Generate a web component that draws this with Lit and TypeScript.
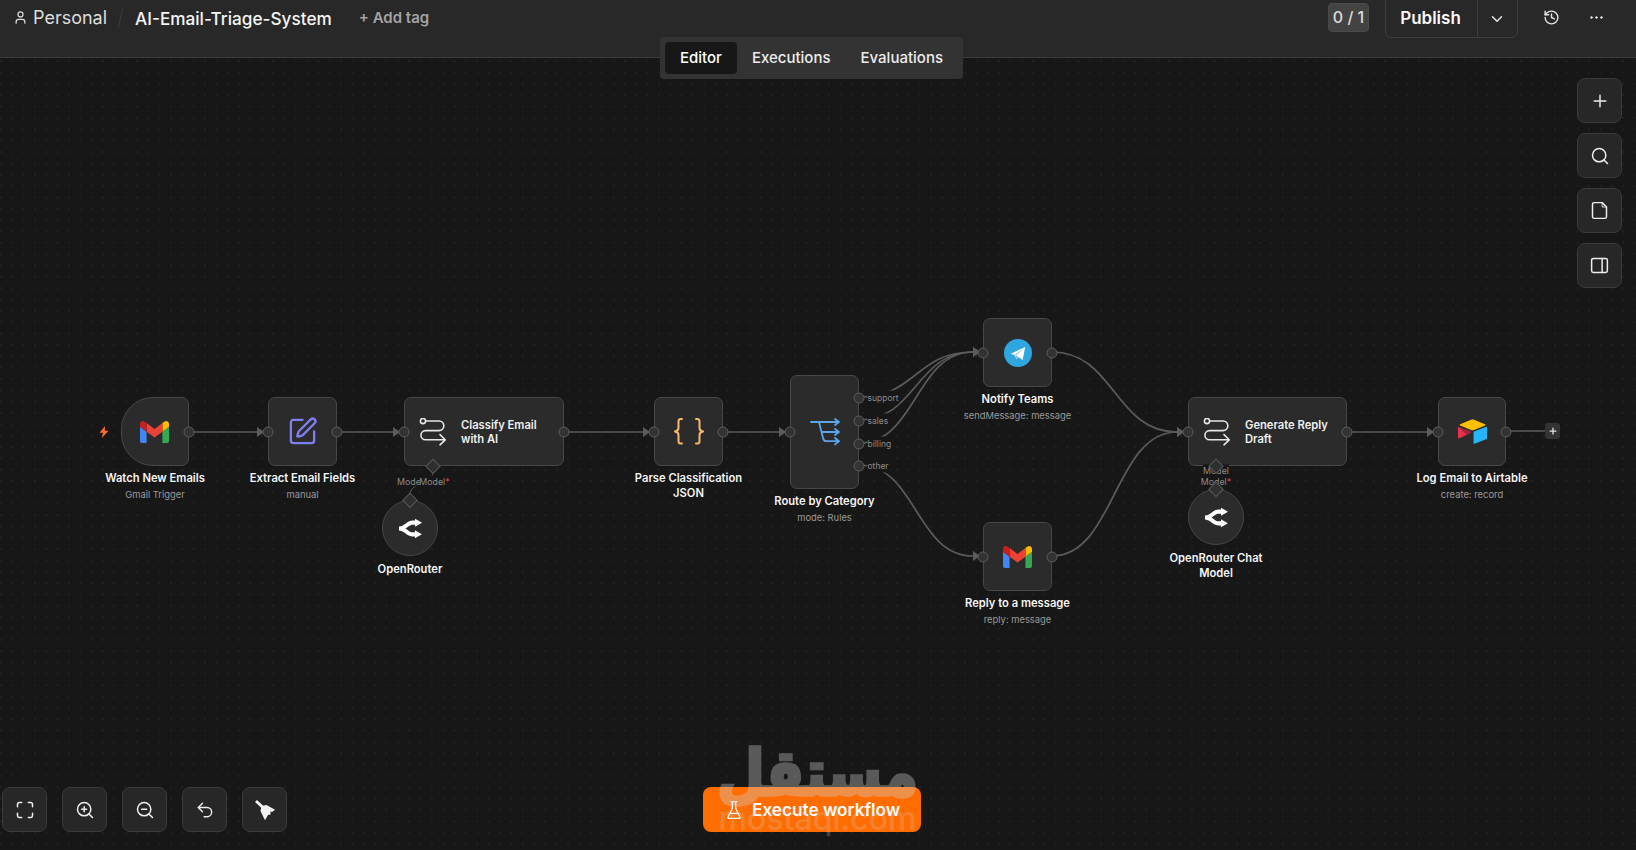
import { LitElement, html, svg, css, nothing } from 'lit';
import { customElement } from 'lit/decorators.js';

const HEAD = 58; // canvas starts below the header, node data is in page coordinates

const icon = (body: unknown, size = 20, sw = 2) => html`<svg
  width=${size} height=${size} viewBox="0 0 24 24" fill="none" stroke="currentColor"
  stroke-width=${sw} stroke-linecap="round" stroke-linejoin="round">${body}</svg>`;

const gmail = html`<svg width="29" height="22" viewBox="52 42 88 66">
  <path fill="#4285f4" d="M58 108h14V74L52 59v43c0 3.32 2.69 6 6 6"/>
  <path fill="#34a853" d="M120 108h14c3.32 0 6-2.69 6-6V59l-20 15"/>
  <path fill="#fbbc04" d="M120 48v26l20-15v-8c0-7.42-8.47-11.65-14.4-7.2"/>
  <path fill="#ea4335" d="M72 74V48l24 18 24-18v26L96 92"/>
  <path fill="#c5221f" d="M52 51v8l20 15V48l-5.6-4.2c-5.94-4.45-14.4-.22-14.4 7.2"/>
</svg>`;

const pen = html`<svg width="31" height="31" viewBox="0 0 24 24" fill="none" stroke="#7f7ff2" stroke-width="1.8"
  stroke-linecap="round" stroke-linejoin="round">
  <path d="M12 3H5a2 2 0 0 0-2 2v14a2 2 0 0 0 2 2h14a2 2 0 0 0 2-2v-7"/>
  <path d="M18.375 2.625a1 1 0 0 1 3 3l-9.013 9.014a2 2 0 0 1-.853.505l-2.873.84a.5.5 0 0 1-.62-.62l.84-2.873a2 2 0 0 1 .506-.852z"/>
</svg>`;

const agent = html`<svg width="27" height="28" viewBox="0 0 27 28" fill="none" stroke="#e6e6e6" stroke-width="1.6"
  stroke-linecap="round" stroke-linejoin="round">
  <circle cx="4" cy="3" r="2.6"/>
  <path d="M7 3H20a4.8 4.8 0 0 1 0 9.6H6.5a4.6 4.6 0 0 0 0 9.2H26M21 16.6l5.2 5.2-5.2 5"/>
</svg>`;

const braces = html`<svg width="30" height="27" viewBox="0 0 30 27" fill="none" stroke="#f6b76c" stroke-width="2"
  stroke-linecap="round" stroke-linejoin="round">
  <path d="M8 1H6.5C5 1 4.5 2 4.5 3.5V10C4.5 11.5 3.5 13 1 13.5C3.5 14 4.5 15.5 4.5 17V23C4.5 24.5 5 25.5 6.5 25.5H8"/>
  <path d="M22 1H23.500C25 1 25.500 2 25.500 3.500V10C25.500 11.500 26.500 13 29 13.500C26.500 14 25.500 15.500 25.500 17V23C25.500 24.500 25 25.500 23.500 25.500H22"/>
</svg>`;

const route = html`<svg width="30" height="28" viewBox="0 0 30 28" fill="none" stroke="#5aa5ee" stroke-width="1.8"
  stroke-linecap="round" stroke-linejoin="round">
  <path d="M1 4H29M25 1l4 3-4 3M9 4l4 16c.5 2 1.500 3.200 3.500 3.200H29M25 20l4 3.200-4 3.200M11.500 14H29M25 11l4 3-4 3"/>
</svg>`;

const telegram = html`<svg width="28" height="28" viewBox="0 0 28 28">
  <circle cx="14" cy="14" r="14" fill="#2ea6e0"/>
  <path fill="#c8daea" d="M10.200 15.900 12.600 20.500 12.400 16.600 19 10.500z"/>
  <path fill="#a9c9dd" d="M12.400 16.600 12.600 20.500 14.800 18.200z"/>
  <path fill="#fff" d="M6.800 14.700 21.200 7.900 18.600 21 12.400 16.600 19 10.500 10.200 15.900z"/>
</svg>`;

const airtable = html`<svg width="29" height="25" viewBox="0 0 200 170">
  <path fill="#ffbf00" d="M90 3.600L14.800 34.700c-4.200 1.700-4.100 7.700.1 9.400l75.500 30c6.600 2.600 14 2.600 20.600 0l75.500-30c4.200-1.700 4.200-7.600.1-9.400L111.300 3.600c-6.800-2.800-14.500-2.800-21.300 0"/>
  <path fill="#26b5f8" d="M107.400 90.400v74.800c0 3.600 3.600 6 6.900 4.700l84.100-32.600c1.900-.8 3.200-2.600 3.200-4.700V57.800c0-3.600-3.600-6-6.900-4.700L110.600 85.700c-1.900.8-3.200 2.600-3.200 4.700"/>
  <path fill="#ed3049" d="M87.800 94.300L62.800 106.400l-2.500 1.200-52.800 25.300C4.100 134.500 0 132 0 128.300V58.100c0-1.300.7-2.500 1.600-3.400.4-.4.8-.7 1.200-.9 1.200-.7 2.900-.9 4.300-.3l80.100 31.700c4 1.600 4.300 7.300.6 9.100"/>
  <path fill="#7a1f3d" d="M62.800 106.400l-2.500 1.200L1.600 54.700c.4-.4.8-.7 1.200-.9 1.200-.7 2.900-.9 4.300-.3l80.100 31.700c4 1.600 4.300 7.300.6 9.100z" opacity=".7"/>
</svg>`;

const openrouter = html`<svg width="23" height="23" viewBox="0 0 24 24" fill="#fff">
  <path d="M16.778 1.844v1.919q-.569-.026-1.138-.032-.708-.008-1.415.037c-1.930.126-4.023.728-6.149 2.237-2.911 2.066-2.731 1.950-4.140 2.750-.396.223-1.342.574-2.185.798-.841.225-1.753.333-1.751.333v4.229s.768.108 1.610.333c.842.224 1.789.575 2.185.799 1.410.798 1.228.683 4.140 2.750 2.126 1.509 4.220 2.110 6.148 2.236.880.058 1.716.041 2.555.005v1.918l7.222-4.168-7.222-4.170v2.176c-.860.038-1.611.065-2.278.021-1.364-.090-2.417-.357-3.979-1.465-2.244-1.593-2.866-2.027-3.680-2.508.889-.518 1.449-.906 3.822-2.590 1.560-1.109 2.614-1.377 3.978-1.466.667-.044 1.418-.017 2.278.020v2.176L24 6.014Z"/>
</svg>`;

type Flow = {
  x: number; y: number; w: number; h: number; kind?: string; icon: unknown;
  title: string; sub?: string; inner?: string[]; outs?: [number, string?][]; noIn?: boolean; noOut?: boolean;
};

const nodes: Flow[] = [
  { x: 121, y: 397, w: 68, h: 69, kind: 'trigger', icon: gmail, title: 'Watch New Emails', sub: 'Gmail Trigger', noIn: true },
  { x: 268, y: 397, w: 69, h: 69, icon: pen, title: 'Extract Email Fields', sub: 'manual' },
  { x: 404, y: 397, w: 160, h: 69, kind: 'wide', icon: agent, title: '', inner: ['Classify Email', 'with AI'] },
  { x: 654, y: 397, w: 69, h: 69, icon: braces, title: 'Parse Classification JSON' },
  {
    x: 790, y: 375, w: 69, h: 114, icon: route, title: 'Route by Category', sub: 'mode: Rules',
    outs: [[22, 'support'], [45, 'sales'], [68, 'billing'], [90, 'other']],
  },
  { x: 983, y: 318, w: 69, h: 69, icon: telegram, title: 'Notify Teams', sub: 'sendMessage: message' },
  { x: 983, y: 522, w: 69, h: 69, icon: gmail, title: 'Reply to a message', sub: 'reply: message' },
  { x: 1188, y: 397, w: 159, h: 69, kind: 'wide', icon: agent, title: '', inner: ['Generate Reply', 'Draft'] },
  { x: 1438, y: 397, w: 68, h: 69, icon: airtable, title: 'Log Email to Airtable', sub: 'create: record' },
  { x: 382, y: 500, w: 56, h: 56, kind: 'circle', icon: openrouter, title: 'OpenRouter', noIn: true, noOut: true },
  { x: 1188, y: 489, w: 56, h: 56, kind: 'circle', icon: openrouter, title: 'OpenRouter Chat Model', noIn: true, noOut: true },
];

// [from x, from y, arrow tip x, arrow tip y] in page coordinates
const edges = [
  [189, 432, 264, 432], [337, 432, 400, 432], [564, 432, 650, 432], [723, 432, 786, 432],
  [859, 397, 980, 352], [859, 420, 980, 352], [859, 443, 980, 352], [859, 465, 980, 556],
  [1052, 352, 1184, 432], [1052, 556, 1184, 432], [1347, 432, 1434, 432],
];

const diamonds = [[433, 466], [410, 500], [1216, 466], [1216, 489]];

const portLabels = [
  { x: 410, y: 481, text: 'Model' },
  { x: 434.500, y: 481, text: 'Model', req: true },
  { x: 1216, y: 470, text: 'Model' },
  { x: 1216, y: 481, text: 'Model', req: true },
];

const edgePath = ([x1, y1, x2, y2]: number[]) => {
  const end = x2 - 7;
  const a = y1 - HEAD;
  const b = y2 - HEAD;
  if (a === b) return `M${x1} ${a}H${end}`;
  const mx = (x1 + end) / 2;
  return `M${x1} ${a}C${mx} ${a} ${mx} ${b} ${end} ${b}`;
};

@customElement('app-root')
export class AppRoot extends LitElement {
  static styles = css`
    :host {
      display: flex;
      flex-direction: column;
      position: relative;
      height: 100vh;
      overflow: hidden;
      font-family: Inter, 'Noto Sans', sans-serif;
      color: #f2f2f2;
      background: #171717;
    }
    svg { display: block; }

    header {
      flex: none;
      height: 57px;
      box-sizing: content-box;
      display: flex;
      justify-content: space-between;
      background: #282828;
      border-bottom: 1px solid #3b3b3b;
    }
    .crumbs {
      display: flex;
      align-items: center;
      height: 35px;
      padding-left: 13px;
    }
    .crumbs .user { color: #dcdcdc; margin-right: 5px; }
    .crumbs .home { font-size: 18px; color: #dedede; }
    .crumbs .slash {
      width: 1px;
      height: 20px;
      margin: 0 14px 0 13px;
      background: #3d3d3d;
      transform: rotate(12deg);
    }
    .crumbs .name { margin-top: 1px; font-size: 17.200px; font-weight: 500; color: #f5f5f5; }
    .crumbs .tag { font-size: 15px; font-weight: 600; color: #a3a3a3; margin-left: 27px; }

    .actions { display: flex; align-items: flex-start; padding-right: 28px; }
    .badge {
      margin-top: 3px;
      width: 41px;
      height: 29px;
      padding-bottom: 2px;
      display: flex;
      align-items: center;
      justify-content: center;
      font-size: 16px;
      font-weight: 500;
      color: #dcdcdc;
      background: #434343;
      border: 1px solid #4a4a4a;
      border-radius: 4px;
      box-sizing: border-box;
    }
    .publish {
      margin: -1px 0 0 16px;
      height: 39px;
      display: flex;
      border: 1px solid #3e3e3e;
      border-radius: 0 0 6px 6px;
      box-sizing: border-box;
    }
    .publish .main {
      width: 92px;
      padding: 0 2px 2px 0;
      box-sizing: border-box;
      display: flex;
      align-items: center;
      justify-content: center;
      font-size: 17px;
      font-weight: 600;
      color: #fafafa;
      border-right: 1px solid #3e3e3e;
    }
    .publish .more { width: 39px; padding-right: 2px; box-sizing: border-box; display: flex; align-items: center; justify-content: center; color: #e6e6e6; }
    .ghost { width: 24px; height: 34px; display: flex; align-items: center; justify-content: center; color: #e2e2e2; }
    .ghost.hist { margin-left: 21px; }
    .ghost.dots { margin-left: 21px; }

    .tabs {
      position: absolute;
      left: 660px;
      top: 37px;
      width: 303px;
      height: 42px;
      box-sizing: border-box;
      padding: 5px;
      display: flex;
      align-items: stretch;
      background: #333;
      border-radius: 4px;
      font-size: 15px;
      font-weight: 500;
      color: #ececec;
      z-index: 3;
    }
    .tabs span { display: flex; align-items: center; padding: 0 15px 1px; }
    .tabs span.on { width: 73px; box-sizing: border-box; justify-content: center; background: #171717; color: #fff; border-radius: 4px; padding: 0 0 1px; }

    .canvas {
      flex: 1;
      position: relative;
      background-color: #171717;
      background-image: radial-gradient(circle, #252525 0.6px, transparent 0.9px);
      background-size: 11.350px 11.350px;
      background-position: -4.800px -2.400px;
    }
    .wires { position: absolute; left: 0; top: 0; overflow: visible; }

    .node {
      position: absolute;
      box-sizing: border-box;
      display: flex;
      align-items: center;
      justify-content: center;
      background: #2b2b2b;
      border: 1.5px solid #474747;
      border-radius: 7px;
    }
    .node.trigger { border-radius: 32px 7px 7px 32px; padding-right: 2px; }
    .node.circle { border-radius: 50%; }
    .node.wide { justify-content: flex-start; padding-left: 14px; gap: 15px; }
    .inner { font-size: 11.200px; font-weight: 600; line-height: 14px; color: #f0f0f0; }
    .inner div { white-space: nowrap; }

    .caption {
      position: absolute;
      top: calc(100% + 6px);
      left: 50%;
      width: 115px;
      margin-left: -57.500px;
      text-align: center;
    }
    .node.circle .caption { top: calc(100% + 7px); }
    .caption .title { font-size: 11.200px; line-height: 14.500px; font-weight: 600; color: #f5f5f5; }
    .caption .sub { margin-top: 2px; font-size: 9.400px; line-height: 13px; color: #9a9a9a; white-space: nowrap; }

    .handle {
      position: absolute;
      width: 11px;
      height: 11px;
      box-sizing: border-box;
      background: #333;
      border: 1px solid #5c5c5c;
      border-radius: 50%;
      transform: translate(-50%, -50%);
      font-style: normal;
    }
    .handle.in { left: -1px; top: 50%; }
    .handle.out { left: calc(100% + 1px); top: 50%; }
    .handle span {
      position: absolute;
      left: 13px;
      top: -3px;
      font-size: 8.500px;
      line-height: 14px;
      color: #8c8c8c;
      background: #171717;
    }

    .diamond {
      position: absolute;
      width: 8.500px;
      height: 8.500px;
      background: #2f2f2f;
      border: 1px solid #575757;
      transform: translate(-50%, -50%) rotate(45deg);
    }
    .port {
      position: absolute;
      font-size: 8.800px;
      line-height: 11px;
      color: #8c8c8c;
      background: #171717;
      transform: translate(-50%, -50%);
      white-space: nowrap;
    }
    .port b { color: #e5484d; font-weight: 400; }

    .bolt { position: absolute; left: 99px; top: 368px; }
    .add {
      position: absolute;
      left: 1545px;
      top: 365px;
      width: 15px;
      height: 16px;
      display: flex;
      align-items: center;
      justify-content: center;
      background: #333;
      border-radius: 3px;
      color: #e8e8e8;
    }

    .tools {
      position: absolute;
      display: flex;
      gap: 10px;
    }
    .tools.side { right: 14px; top: 20px; flex-direction: column; }
    .tools.foot { left: 2px; bottom: 18px; gap: 15px; }
    .tool {
      width: 45px;
      height: 45px;
      box-sizing: border-box;
      display: flex;
      align-items: center;
      justify-content: center;
      background: #272727;
      border: 1.5px solid #3a3a3a;
      border-radius: 8px;
      color: #eee;
    }

    .run {
      position: absolute;
      left: 703px;
      bottom: 18px;
      width: 218px;
      height: 45px;
      display: flex;
      align-items: center;
      gap: 8px;
      padding-left: 21px;
      box-sizing: border-box;
      background: #ff6d00;
      border-radius: 8px;
      font-size: 17.200px;
      font-weight: 600;
      color: #fff;
    }

    .mark {
      position: absolute;
      left: 700px;
      width: 235px;
      top: 680px;
      display: flex;
      flex-direction: column;
      align-items: center;
      pointer-events: none;
      opacity: 0.36;
      color: #cfcfcf;
      z-index: 4;
    }
    .mark .ar {
      font-family: 'DejaVu Sans', sans-serif;
      font-weight: 700;
      font-size: 55px;
      line-height: 70px;
      -webkit-text-stroke: 3px #cfcfcf;
      transform: scaleY(1.15);
    }
    .mark .lat {
      margin-top: -7px;
      font-family: Inter, sans-serif;
      font-weight: 500;
      font-size: 32px;
      line-height: 36px;
      opacity: 0.65;
    }
  `;

  private renderNode(n: Flow) {
    return html`<div class="node ${n.kind ?? ''}"
      style="left:${n.x}px;top:${n.y - HEAD}px;width:${n.w}px;height:${n.h}px">
      ${n.icon}
      ${n.inner ? html`<div class="inner">${n.inner.map((l) => html`<div>${l}</div>`)}</div>` : nothing}
      ${n.noIn ? nothing : html`<i class="handle in"></i>`}
      ${n.noOut ? nothing : n.outs
        ? n.outs.map(([top, text]) => html`<i class="handle out" style="top:${top}px"><span>${text}</span></i>`)
        : html`<i class="handle out"></i>`}
      ${n.title ? html`<div class="caption">
        <div class="title">${n.title}</div>
        ${n.sub ? html`<div class="sub">${n.sub}</div>` : nothing}
      </div>` : nothing}
    </div>`;
  }

  render() {
    return html`
      <header>
        <div class="crumbs">
          <span class="user">${icon(svg`<path d="M19 21v-2a4 4 0 0 0-4-4H9a4 4 0 0 0-4 4v2"/><circle cx="12" cy="7" r="4"/>`, 15, 2)}</span>
          <span class="home">Personal</span>
          <i class="slash"></i>
          <span class="name">AI-Email-Triage-System</span>
          <span class="tag">+ Add tag</span>
        </div>
        <div class="actions">
          <div class="badge">0 / 1</div>
          <div class="publish">
            <div class="main">Publish</div>
            <div class="more">${icon(svg`<path d="m6 9 6 6 6-6"/>`, 18, 2)}</div>
          </div>
          <div class="ghost hist">${icon(svg`<path d="M3 12a9 9 0 1 0 9-9 9.750 9.750 0 0 0-6.740 2.740L3 8"/><path d="M3 3v5h5"/><path d="M12 7v5l4 2"/>`, 17, 2)}</div>
          <div class="ghost dots">${icon(svg`<circle cx="5" cy="12" r="1.300" fill="currentColor"/><circle cx="12" cy="12" r="1.300" fill="currentColor"/><circle cx="19" cy="12" r="1.300" fill="currentColor"/>`, 17, 1)}</div>
        </div>
      </header>

      <div class="tabs">
        <span class="on">Editor</span>
        <span>Executions</span>
        <span>Evaluations</span>
      </div>

      <div class="canvas">
        <svg class="wires" width="1636" height="792" fill="none" stroke="#5b5b5b" stroke-width="1.700">
          ${edges.map((e) => svg`
            <path d=${edgePath(e)}/>
            <path d="M${e[2] - 7} ${e[3] - HEAD - 5}l7 5-7 5z" fill="#5b5b5b" stroke="none"/>`)}
          <path d="M1506 ${431 - HEAD}H1545"/>
          <path d="M433 ${472 - HEAD}C433 ${485 - HEAD} 410 ${482 - HEAD} 410 ${494 - HEAD}" stroke-width="1"/>
          <path d="M1216 ${472 - HEAD}V${484 - HEAD}" stroke-width="1"/>
        </svg>

        ${nodes.map((n) => this.renderNode(n))}
        ${portLabels.map((p) => html`<span class="port" style="left:${p.x}px;top:${p.y - HEAD}px">${p.text}${p.req ? html`<b>*</b>` : nothing}</span>`)}
        ${diamonds.map(([x, y]) => html`<i class="diamond" style="left:${x}px;top:${y - HEAD}px"></i>`)}

        <svg class="bolt" width="10" height="12" viewBox="0 0 10 12"><path fill="#ff6d2d" d="M6 0 0.500 6.800H4L2.800 12 9.500 4.800H5.800z"/></svg>
        <div class="add">${icon(svg`<path d="M5 12h14M12 5v14"/>`, 10, 3)}</div>

        <div class="tools side">
          <div class="tool">${icon(svg`<path d="M5 12h14M12 5v14"/>`, 20, 1.700)}</div>
          <div class="tool">${icon(svg`<circle cx="11" cy="11" r="8"/><path d="m21 21-4.300-4.300"/>`, 20, 1.800)}</div>
          <div class="tool">${icon(svg`<path d="M15 3H6a2 2 0 0 0-2 2v14a2 2 0 0 0 2 2h12a2 2 0 0 0 2-2V8z"/><path d="M15 3v5h5" stroke-width="1"/>`, 21, 1.700)}</div>
          <div class="tool">${icon(svg`<rect x="3" y="4" width="18" height="16" rx="2"/><path d="M15 4v16"/>`, 21, 1.700)}</div>
        </div>

        <div class="tools foot">
          <div class="tool">${icon(svg`<path d="M8 3H5a2 2 0 0 0-2 2v3M21 8V5a2 2 0 0 0-2-2h-3M3 16v3a2 2 0 0 0 2 2h3M16 21h3a2 2 0 0 0 2-2v-3"/>`, 20, 1.800)}</div>
          <div class="tool">${icon(svg`<circle cx="11" cy="11" r="8"/><path d="m21 21-4.300-4.300M11 8v6M8 11h6"/>`, 20, 1.800)}</div>
          <div class="tool">${icon(svg`<circle cx="11" cy="11" r="8"/><path d="m21 21-4.300-4.300M8 11h6"/>`, 20, 1.800)}</div>
          <div class="tool">${icon(svg`<path d="M9 14 4 9l5-5"/><path d="M4 9h10.500a5.500 5.500 0 0 1 0 11H11"/>`, 20, 1.700)}</div>
          <div class="tool"><svg width="22" height="22" viewBox="0 0 22 22" fill="#f2f2f2">
            <path d="M1 3 3 1 10 7.500 8 9.500z"/>
            <path d="M7.500 7 12.500 6 21 10.700 18 13 16.500 12.500 16.500 15.500 14 16 11 21.300 6.500 12z"/>
          </svg></div>
        </div>

        <div class="run">
          ${icon(svg`<path d="M10 2v7.527a2 2 0 0 1-.211.896L4.720 20.550a1 1 0 0 0 .9 1.450h12.760a1 1 0 0 0 .9-1.450l-5.069-10.127A2 2 0 0 1 14 9.527V2"/><path d="M8.500 2h7"/><path d="M7 16h10"/>`, 20, 1.600)}
          Execute workflow
        </div>

        <div class="mark">
          <div class="ar" dir="rtl">مستقل</div>
          <div class="lat">mostaql.com</div>
        </div>
      </div>
    `;
  }
}
